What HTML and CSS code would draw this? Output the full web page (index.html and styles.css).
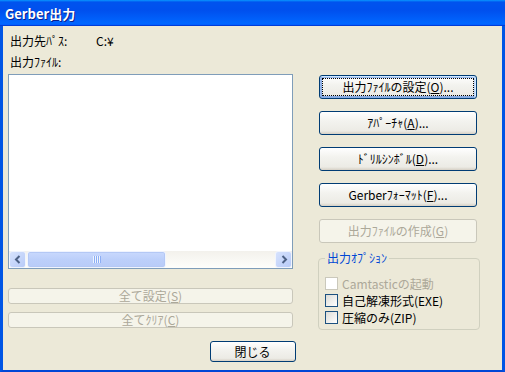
FILE: index.html
```html
<!DOCTYPE html>
<html lang="ja">
<head>
<meta charset="utf-8">
<title>Gerber出力</title>
<link rel="stylesheet" href="styles.css">
</head>
<body>
<div class="window">
  <div class="titlebar"><span class="title">Gerber出力</span></div>
  <div class="client">
    <div class="main">
      <div class="left">
        <div class="label-row"><span class="label">出力先ﾊﾟｽ:</span><span class="path">C:¥</span></div>
        <div class="label-row second"><span class="label">出力ﾌｧｲﾙ:</span></div>
        <div class="listbox">
          <div class="list-items"></div>
          <div class="hscroll">
            <div class="sbtn"><svg width="8" height="9" viewBox="0 0 8 9"><path d="M5.5 1 L2 4.5 L5.5 8" fill="none" stroke="#4D6185" stroke-width="2"/></svg></div>
            <div class="thumb"><span class="grip"></span></div>
            <div class="track"></div>
            <div class="sbtn"><svg width="8" height="9" viewBox="0 0 8 9"><path d="M2.5 1 L6 4.5 L2.5 8" fill="none" stroke="#4D6185" stroke-width="2"/></svg></div>
          </div>
        </div>
        <button class="btn wide disabled first-wide">全て設定(<u>S</u>)</button>
        <button class="btn wide disabled second-wide">全てｸﾘｱ(<u>C</u>)</button>
      </div>
      <div class="right">
        <button class="btn side default"><span class="focus">出力ﾌｧｲﾙの設定(<u>O</u>)...</span></button>
        <button class="btn side">ｱﾊﾟｰﾁｬ(<u>A</u>)...</button>
        <button class="btn side">ﾄﾞﾘﾙｼﾝﾎﾞﾙ(<u>D</u>)...</button>
        <button class="btn side">Gerberﾌｫｰﾏｯﾄ(<u>F</u>)...</button>
        <button class="btn side disabled">出力ﾌｧｲﾙの作成(<u>G</u>)</button>
        <fieldset class="group">
          <legend class="group-title">出力ｵﾌﾟｼｮﾝ</legend>
          <div class="check off"><span class="box"></span><span class="check-label">Camtasticの起動</span></div>
          <div class="check"><span class="box"></span><span class="check-label">自己解凍形式(EXE)</span></div>
          <div class="check"><span class="box"></span><span class="check-label">圧縮のみ(ZIP)</span></div>
        </fieldset>
      </div>
    </div>
    <div class="bottom">
      <button class="btn close">閉じる</button>
    </div>
  </div>
</div>
</body>
</html>
```

FILE: styles.css
```css
* { box-sizing: border-box; }
html, body { margin: 0; padding: 0; }
body {
  width: 505px;
  height: 372px;
  overflow: hidden;
  background: #ECE9D8;
  font-family: "Noto Sans CJK JP", "Noto Sans", sans-serif;
  font-size: 12px;
  color: #000;
}
.window {
  width: 505px;
  height: 372px;
  display: flex;
  flex-direction: column;
}
.titlebar {
  height: 26px;
  flex: none;
  display: flex;
  align-items: center;
  padding-left: 5px;
  background: linear-gradient(180deg, #0997ff, #0053ee 8%, #0050ee 40%, #0066ff 88%, #0066ff 93%, #005bff 95%, #003dd7 96%, #003dd7);
}
.title {
  color: #fff;
  font-weight: bold;
  font-size: 13px;
  line-height: 1;
  text-shadow: 1px 1px 0 #0a1e8c;
}
.client {
  flex: 1;
  display: flex;
  flex-direction: column;
  background: #ECE9D8;
  border-left: 3px solid #0055E5;
  border-right: 3px solid #0055E5;
  border-bottom: 2px solid #0047D6;
  padding: 9px 5px 0 5px;
}
.main { display: flex; }
.left {
  width: 285px;
  flex: none;
  display: flex;
  flex-direction: column;
}
.label-row {
  height: 12px;
  line-height: 12px;
  padding-left: 2px;
  display: flex;
  white-space: nowrap;
}
.label-row.second { margin-top: 9px; }
.label { width: 86px; }
.listbox {
  margin-top: 6px;
  height: 195px;
  border: 1px solid #7F9DB9;
  background: #fff;
  display: flex;
  flex-direction: column;
}
.list-items { flex: 1; }
.hscroll {
  height: 17px;
  display: flex;
  background: linear-gradient(180deg, #F3F1EC, #FEFEFB);
}
.sbtn {
  width: 17px;
  height: 17px;
  flex: none;
  display: flex;
  align-items: center;
  justify-content: center;
  border: 1px solid #F0F4FE;
  border-radius: 3px;
  background: linear-gradient(135deg, #D6E2FD, #B8CBF8);
}
.thumb {
  width: 139px;
  height: 17px;
  margin-left: 1px;
  flex: none;
  display: flex;
  align-items: center;
  justify-content: center;
  border: 1px solid #F0F4FE;
  border-radius: 3px;
  background: linear-gradient(180deg, #C9D9FD, #BCCFFA 50%, #B8CBF8);
  box-shadow: inset 0 0 0 1px #B4C8F5;
}
.grip {
  width: 8px;
  height: 7px;
  background: repeating-linear-gradient(90deg, #EEF4FE 0 1px, #8CAEF5 1px 2px);
}
.track { flex: 1; }

.btn {
  font: inherit;
  color: #000;
  padding: 0;
  margin: 0;
  border: 1px solid #003C74;
  border-radius: 3px;
  background: linear-gradient(180deg, #FFFFFF, #F3F3EF 40%, #ECEBE5 86%, #D6D0C5);
  white-space: nowrap;
  display: flex;
  align-items: center;
  justify-content: center;
  line-height: 12px;
}
.btn u { text-underline-offset: 1px; }
.btn.disabled {
  color: #ACA899;
  border-color: #C9C7BA;
  background: #F5F4EA;
}
.wide { width: 285px; height: 16px; }
.first-wide { margin-top: 19px; }
.second-wide { margin-top: 8px; }

.right {
  width: 162px;
  flex: none;
  margin-left: 25px;
  padding-top: 40px;
  display: flex;
  flex-direction: column;
}
.side {
  width: 158px;
  height: 24px;
  margin-left: 1px;
  margin-bottom: 12px;
}
.side.disabled { margin-bottom: 0; }
.default {
  box-shadow: inset -1px 1px #CEE7FF, inset 1px 2px #98B8EA, inset -2px 2px #BCD4F6, inset 1px -1px #89ADE4, inset 2px -2px #89ADE4;
  position: relative;
}
.focus {
  display: flex;
  align-items: center;
  justify-content: center;
  width: 150px;
  height: 16px;
  outline: 1px dotted #000;
}
.group {
  margin: 9px 0 0 0;
  padding: 11px 0 3px 6px;
  border: 1px solid #D0D0BF;
  border-radius: 4px;
  min-width: 0;
}
.group-title {
  padding: 0 2px;
  color: #0046D5;
  line-height: 12px;
  height: 12px;
}
.check {
  height: 17px;
  display: flex;
  align-items: center;
  white-space: nowrap;
  line-height: 12px;
}
.box {
  width: 13px;
  height: 13px;
  flex: none;
  margin-right: 4px;
  border: 1px solid #1C5180;
  background: linear-gradient(135deg, #DCDCD7, #FFFFFF);
}
.check.off .box {
  border-color: #CAC8BB;
  background: #FFFFFF;
}
.check.off .check-label { color: #ACA899; }

.bottom {
  display: flex;
  justify-content: center;
  margin-top: 11px;
}
.close {
  width: 86px;
  height: 21px;
}
```
